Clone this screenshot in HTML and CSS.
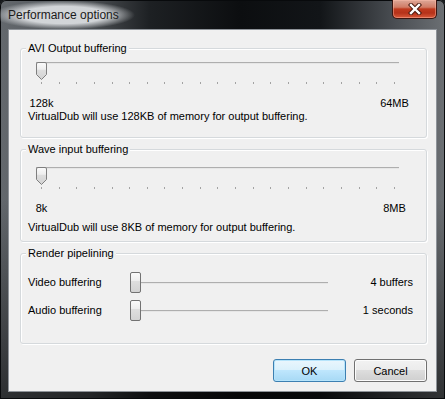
FILE: index.html
```html
<!DOCTYPE html>
<html>
<head>
<meta charset="utf-8">
<link rel="stylesheet" href="styles.css">
</head>
<body>
<svg class="defs" width="0" height="0" aria-hidden="true">
  <defs>
    <linearGradient id="tg" x1="0" y1="0" x2="0" y2="1">
      <stop offset="0" stop-color="#fbfbfb"/>
      <stop offset="0.4" stop-color="#eeeeee"/>
      <stop offset="0.45" stop-color="#dedede"/>
      <stop offset="1" stop-color="#d2d2d2"/>
    </linearGradient>
  </defs>
</svg>
<div class="window">
  <div class="titlebar">
    <span class="title">Performance options</span>
    <button class="close" aria-label="Close">
      <svg width="14" height="12" viewBox="0 0 14 12">
        <path d="M3 2l8 8M11 2l-8 8" stroke="#4a1b10" stroke-width="4.4" stroke-linecap="square"/>
        <path d="M3 2l8 8M11 2l-8 8" stroke="#ffffff" stroke-width="2.4" stroke-linecap="square"/>
      </svg>
    </button>
  </div>
  <div class="client">
    <section class="group g1">
      <div class="group-title">AVI Output buffering</div>
      <div class="tslider">
        <div class="track"></div>
        <svg class="thumb" width="11" height="18" viewBox="0 0 11 18"><path d="M2 .5h7a1.5 1.5 0 0 1 1.5 1.5v10.5L5.5 17.5.5 12.5V2A1.5 1.5 0 0 1 2 .5z" fill="url(#tg)" stroke="#7f7f7f"/></svg>
      </div>
      <div class="ticks"><i></i><i></i><i></i><i></i><i></i><i></i><i></i><i></i><i></i><i></i><i></i><i></i><i></i><i></i><i></i><i></i><i></i><i></i><i></i><i></i><i></i></div>
      <div class="ends"><span>128k</span><span>64MB</span></div>
      <p class="desc">VirtualDub will use 128KB of memory for output buffering.</p>
    </section>
    <section class="group g2">
      <div class="group-title">Wave input buffering</div>
      <div class="tslider">
        <div class="track"></div>
        <svg class="thumb" width="11" height="18" viewBox="0 0 11 18"><path d="M2 .5h7a1.5 1.5 0 0 1 1.5 1.5v10.5L5.5 17.5.5 12.5V2A1.5 1.5 0 0 1 2 .5z" fill="url(#tg)" stroke="#7f7f7f"/></svg>
      </div>
      <div class="ticks"><i></i><i></i><i></i><i></i><i></i><i></i><i></i><i></i><i></i><i></i><i></i><i></i><i></i><i></i><i></i><i></i><i></i><i></i><i></i><i></i><i></i></div>
      <div class="ends"><span>8k</span><span>8MB</span></div>
      <p class="desc">VirtualDub will use 8KB of memory for output buffering.</p>
    </section>
    <section class="group g3">
      <div class="group-title">Render pipelining</div>
      <div class="row">
        <span class="row-label">Video buffering</span>
        <div class="hslider">
          <div class="htrack"></div>
          <svg class="hthumb" width="11" height="21" viewBox="0 0 11 21"><rect x=".5" y=".5" width="10" height="20" rx="1.5" fill="url(#tg)" stroke="#727272"/></svg>
        </div>
        <span class="row-value">4 buffers</span>
      </div>
      <div class="row row2">
        <span class="row-label">Audio buffering</span>
        <div class="hslider">
          <div class="htrack"></div>
          <svg class="hthumb" width="11" height="21" viewBox="0 0 11 21"><rect x=".5" y=".5" width="10" height="20" rx="1.5" fill="url(#tg)" stroke="#727272"/></svg>
        </div>
        <span class="row-value">1 seconds</span>
      </div>
    </section>
    <div class="buttons">
      <button class="btn btn-default">OK</button>
      <button class="btn">Cancel</button>
    </div>
  </div>
</div>
</body>
</html>
```
FILE: styles.css
```css
html, body {
  margin: 0;
  padding: 0;
}
body {
  background: #15181b;
  font-family: "Liberation Sans", Arial, sans-serif;
  font-size: 11px;
  color: #000;
}
.defs {
  position: absolute;
  width: 0;
  height: 0;
}
.window {
  width: 445px;
  height: 399px;
  box-sizing: border-box;
  padding: 0 8px 7px;
  display: flex;
  flex-direction: column;
  border-radius: 6px 6px 0 0;
  background:
    linear-gradient(to bottom, rgba(0,0,0,0) 0, rgba(0,0,0,0) 50%, rgba(0,0,0,0.55) 100%),
    linear-gradient(to right, #63686d 0, #4d5155 90px, #1d2023 150px, #0c0e10 240px, #121518 320px, #4a4e53 395px, #6c7074 445px);
  box-shadow: inset 0 0 0 1px #080a0c;
}
.titlebar {
  height: 29px;
  display: flex;
  align-items: flex-start;
}
.title {
  font-family: "Liberation Sans", Arial, sans-serif;
  font-size: 12px;
  line-height: 30px;
  color: #1b1b1b;
  padding: 0 16px;
  margin-left: -16px;
  background: radial-gradient(ellipse 50% 48% at 50% 50%, rgba(214,217,220,0.97) 60%, rgba(214,217,220,0) 100%);
}
.close {
  margin-left: auto;
  width: 45px;
  height: 19px;
  padding: 0;
  border: 1px solid #3a1510;
  border-top: none;
  border-radius: 0 0 5px 5px;
  background: linear-gradient(#dda898 0, #d07c66 40%, #bf3a1e 50%, #b5321a 72%, #d9593a 100%);
  box-shadow: inset 0 0 0 1px rgba(255, 190, 170, 0.45);
  display: flex;
  align-items: center;
  justify-content: center;
}
.close svg {
  display: block;
}
.client {
  flex: 1;
  background: #f0f0f0;
  border: 1px solid #8e9399;
  padding: 18px 9px 9px 11px;
  display: flex;
  flex-direction: column;
}
.group {
  box-sizing: border-box;
  border: 1px solid #d5d9dc;
  border-radius: 3px;
  box-shadow: inset 1px 1px 0 #fff, 1px 1px 0 #fff;
}
.g1 { height: 90px; }
.g2 { height: 93px; margin-top: 11px; }
.g3 { height: 91px; margin-top: 11px; }
.group-title {
  width: fit-content;
  margin: -7px 0 0 5px;
  padding: 0 2px;
  background: #f0f0f0;
  line-height: 13px;
}
.tslider {
  position: relative;
  height: 18px;
  width: 363px;
  margin-left: 15px;
}
.g1 .tslider { margin-top: 7px; }
.g2 .tslider { margin-top: 11px; }
.track {
  height: 2px;
  margin-top: 5px;
  background: linear-gradient(#aeaeae 0 50%, #e6e6e6 50% 100%);
}
.thumb {
  position: absolute;
  left: 0;
  top: 0;
  display: block;
}
.ticks {
  display: flex;
  justify-content: space-between;
  width: 354px;
  height: 2px;
  margin: 2px 0 0 20px;
}
.ticks i {
  width: 1px;
  background: #a3a3a3;
}
.ends {
  display: flex;
  justify-content: space-between;
  width: 354px;
  margin: 13px 0 0 20px;
  line-height: 13px;
}
.ends span {
  width: 1px;
  display: flex;
  justify-content: center;
  white-space: nowrap;
}
.desc {
  margin: 0 0 0 7px;
  line-height: 13px;
}
.g2 .desc { margin-top: 6px; }
.row {
  display: flex;
  align-items: center;
  height: 21px;
  margin-top: 12px;
  padding: 0 13px 0 7px;
}
.row2 { margin-top: 7px; }
.row-label {
  width: 102px;
  line-height: 13px;
}
.hslider {
  position: relative;
  width: 198px;
  height: 21px;
  display: flex;
  align-items: center;
}
.htrack {
  width: 100%;
  height: 2px;
  background: linear-gradient(#aeaeae 0 50%, #e6e6e6 50% 100%);
}
.hthumb {
  position: absolute;
  left: 0;
  top: 0;
  display: block;
}
.row-value {
  flex: 1;
  text-align: right;
  line-height: 13px;
}
.buttons {
  display: flex;
  justify-content: flex-end;
  gap: 8px;
  margin-top: 15px;
}
.btn {
  width: 73px;
  height: 23px;
  box-sizing: border-box;
  border: 1px solid #707070;
  border-radius: 3px;
  font-family: "Liberation Sans", Arial, sans-serif;
  font-size: 11px;
  color: #000;
  padding: 0;
  background: linear-gradient(#f2f2f2 0, #ebebeb 50%, #dddddd 50%, #cfcfcf 100%);
  box-shadow: inset 0 0 0 1px #fcfcfc;
}
.btn-default {
  border-color: #3c7fb1;
  background: linear-gradient(#eaf6fd 0, #d9f0fc 50%, #bee6fd 50%, #a7d9f5 100%);
  box-shadow: inset 0 0 0 1px #b6e4fb;
}
```
